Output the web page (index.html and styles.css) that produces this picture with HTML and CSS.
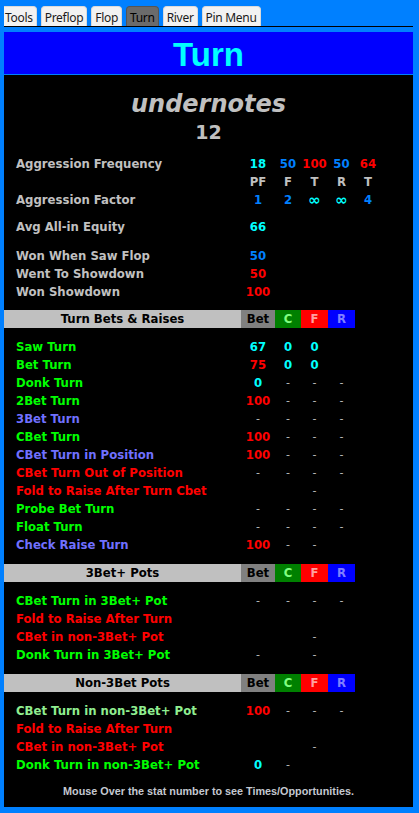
FILE: index.html
```
<!DOCTYPE html>
<html>
<head>
	<title>Turn HUD</title>
	<meta charset="utf-8">
	<link rel="stylesheet" href="styles.css">
</head>
<body>
	<div class="tabs">
		<div class="tab first">Tools</div>
		<div class="tab">Preflop</div>
		<div class="tab">Flop</div>
		<div class="tab active">Turn</div>
		<div class="tab">River</div>
		<div class="tab">Pin Menu</div>
	</div>

	<div id="panel">
		<div class="title">Turn</div>

		<div class="player">undernotes</div>
		<div class="hands">12</div>

		<!-- general stats -->
		<div class="stats">
			<div class="row">
				<span class="lbl silver">Aggression Frequency</span>
				<span class="cyan">18</span><span class="blue">50</span><span class="red">100</span><span class="blue">50</span><span class="red">64</span>
			</div>
			<div class="row">
				<span class="lbl"></span>
				<span class="silver">PF</span><span class="silver">F</span><span class="silver">T</span><span class="silver">R</span><span class="silver">T</span>
			</div>
			<div class="row">
				<span class="lbl silver">Aggression Factor</span>
				<span class="blue">1</span><span class="blue">2</span><span class="cyan inf">∞</span><span class="cyan inf">∞</span><span class="blue">4</span>
			</div>
			<div class="row sp9">
				<span class="lbl silver">Avg All-in Equity</span>
				<span class="cyan">66</span>
			</div>
			<div class="row sp11">
				<span class="lbl silver">Won When Saw Flop</span>
				<span class="blue">50</span>
			</div>
			<div class="row">
				<span class="lbl silver">Went To Showdown</span>
				<span class="red">50</span>
			</div>
			<div class="row">
				<span class="lbl silver">Won Showdown</span>
				<span class="red">100</span>
			</div>
		</div>

		<!-- turn bets -->
		<div class="head first-head">
			<span class="hname">Turn Bets &amp; Raises</span><span class="hbet">Bet</span><span class="hc">C</span><span class="hf">F</span><span class="hr">R</span>
		</div>
		<div class="section">
			<div class="row"><span class="lbl green">Saw Turn</span><span class="cyan">67</span><span class="cyan">0</span><span class="cyan">0</span></div>
			<div class="row"><span class="lbl green">Bet Turn</span><span class="red">75</span><span class="cyan">0</span><span class="cyan">0</span></div>
			<div class="row"><span class="lbl green">Donk Turn</span><span class="cyan">0</span><span class="dash">-</span><span class="dash">-</span><span class="dash">-</span></div>
			<div class="row"><span class="lbl green">2Bet Turn</span><span class="red">100</span><span class="dash">-</span><span class="dash">-</span><span class="dash">-</span></div>
			<div class="row"><span class="lbl violet">3Bet Turn</span><span class="dash">-</span><span class="dash">-</span><span class="dash">-</span><span class="dash">-</span></div>
			<div class="row"><span class="lbl green">CBet Turn</span><span class="red">100</span><span class="dash">-</span><span class="dash">-</span><span class="dash">-</span></div>
			<div class="row"><span class="lbl violet">CBet Turn in Position</span><span class="red">100</span><span class="dash">-</span><span class="dash">-</span><span class="dash">-</span></div>
			<div class="row"><span class="lbl red">CBet Turn Out of Position</span><span class="dash">-</span><span class="dash">-</span><span class="dash">-</span><span class="dash">-</span></div>
			<div class="row"><span class="lbl red">Fold to Raise After Turn Cbet</span><span></span><span></span><span class="dash">-</span></div>
			<div class="row"><span class="lbl green">Probe Bet Turn</span><span class="dash">-</span><span class="dash">-</span><span class="dash">-</span><span class="dash">-</span></div>
			<div class="row"><span class="lbl green">Float Turn</span><span class="dash">-</span><span class="dash">-</span><span class="dash">-</span><span class="dash">-</span></div>
			<div class="row"><span class="lbl violet">Check Raise Turn</span><span class="red">100</span><span class="dash">-</span><span class="dash">-</span></div>
		</div>

		<!-- 3bet pots -->
		<div class="head">
			<span class="hname">3Bet+ Pots</span><span class="hbet">Bet</span><span class="hc">C</span><span class="hf">F</span><span class="hr">R</span>
		</div>
		<div class="section">
			<div class="row"><span class="lbl green">CBet Turn in 3Bet+ Pot</span><span class="dash">-</span><span class="dash">-</span><span class="dash">-</span><span class="dash">-</span></div>
			<div class="row"><span class="lbl red">Fold to Raise After Turn</span></div>
			<div class="row"><span class="lbl red">CBet in non-3Bet+ Pot</span><span></span><span></span><span class="dash">-</span></div>
			<div class="row"><span class="lbl green">Donk Turn in 3Bet+ Pot</span><span class="dash">-</span><span></span><span class="dash">-</span></div>
		</div>

		<!-- non 3bet pots -->
		<div class="head">
			<span class="hname">Non-3Bet Pots</span><span class="hbet">Bet</span><span class="hc">C</span><span class="hf">F</span><span class="hr">R</span>
		</div>
		<div class="section">
			<div class="row"><span class="lbl pale">CBet Turn in non-3Bet+ Pot</span><span class="red">100</span><span class="dash">-</span><span class="dash">-</span><span class="dash">-</span></div>
			<div class="row"><span class="lbl red">Fold to Raise After Turn</span></div>
			<div class="row"><span class="lbl red">CBet in non-3Bet+ Pot</span><span></span><span></span><span class="dash">-</span></div>
			<div class="row"><span class="lbl green">Donk Turn in non-3Bet+ Pot</span><span class="cyan">0</span><span class="dash">-</span></div>
		</div>

		<div class="footer">Mouse Over the stat number to see Times/Opportunities.</div>
	</div>
</body>
</html>
```
FILE: styles.css
```
body{
	margin: 0;
	width: 419px;
	height: 813px;
	overflow: hidden;
	background-color: #0080FF;
	font-family: "DejaVu Sans", Verdana, sans-serif;
}

.tabs{
	display: flex;
	gap: 4px;
	width: 409px;
	height: 20px;
	margin-left: 4px;
	padding-top: 6px;
	overflow: hidden;
	border-bottom: 1px solid #000;
}

.tab{
	height: 20px;
	padding: 2px 3px 0 3px;
	line-height: 18px;
	font-family: "Noto Sans", "Open Sans", sans-serif;
	font-size: 12px;
	letter-spacing: -0.3px;
	color: #1a1a1a;
	background-color: #F2F2F2;
	border: 1px solid #DADADA;
	border-bottom: none;
	border-radius: 4px 4px 0 0;
	box-sizing: border-box;
	white-space: nowrap;
}

.tab.first{
	margin-left: -4px;
	padding-left: 4px;
	border-radius: 0 4px 0 0;
}

.tab.active{
	background-color: #6B6B6B;
	border-color: #555;
	color: #000;
}

#panel{
	width: 409px;
	height: 775px;
	margin: 5px 0 0 4px;
	background-color: #000;
	font-weight: bold;
	font-size: 11.7px;
}

.title{
	height: 39px;
	padding-top: 3px;
	line-height: 39px;
	text-align: center;
	font-family: "Liberation Sans", Arial, sans-serif;
	font-size: 33px;
	color: #00FFFF;
	background-color: #0000FF;
	border-bottom: 1px solid #0080FF;
}

.player{
	margin-top: 15px;
	line-height: 28px;
	text-align: center;
	font-size: 24px;
	font-style: italic;
	color: #C0C0C0;
}

.hands{
	margin-top: 3px;
	line-height: 22px;
	text-align: center;
	font-size: 19px;
	color: #C0C0C0;
}

.stats{
	margin-top: 12px;
}

.row{
	display: grid;
	grid-template-columns: 237px 34px 26px 27px 27px 26px;
	height: 18px;
	line-height: 18px;
	white-space: nowrap;
}

.row span{
	text-align: center;
}

.row .lbl{
	text-align: left;
	padding-left: 12px;
}

.row .inf{
	font-size: 15px;
}

.sp9{
	margin-top: 9px;
}

.sp11{
	margin-top: 11px;
}

.head{
	display: grid;
	grid-template-columns: 237px 34px 26px 27px 27px;
	height: 18px;
	line-height: 18px;
	margin-top: 10px;
	text-align: center;
	color: #000;
}

.first-head{
	margin-top: 9px;
}

.hname{
	background-color: #C0C0C0;
}

.hbet{
	background-color: #808080;
}

.hc{
	background-color: #008000;
	color: #80FF80;
}

.hf{
	background-color: #FF0000;
	color: #FFA0A0;
}

.hr{
	background-color: #0000FF;
	color: #8080FF;
}

.section{
	margin-top: 10px;
}

.footer{
	margin-top: 10px;
	line-height: 14px;
	text-align: center;
	font-family: "Liberation Sans", Arial, sans-serif;
	font-size: 10.8px;
	color: #C4C8D0;
}

.silver{ color: #C0C0C0; }
.cyan{ color: #00FFFF; }
.blue{ color: #0080FF; }
.red{ color: #FF0000; }
.green{ color: #00FF00; }
.violet{ color: #7070FF; }
.pale{ color: #90EE90; }

.dash{
	color: #C0C0C0;
	font-weight: normal;
	font-size: 11px;
}
```
